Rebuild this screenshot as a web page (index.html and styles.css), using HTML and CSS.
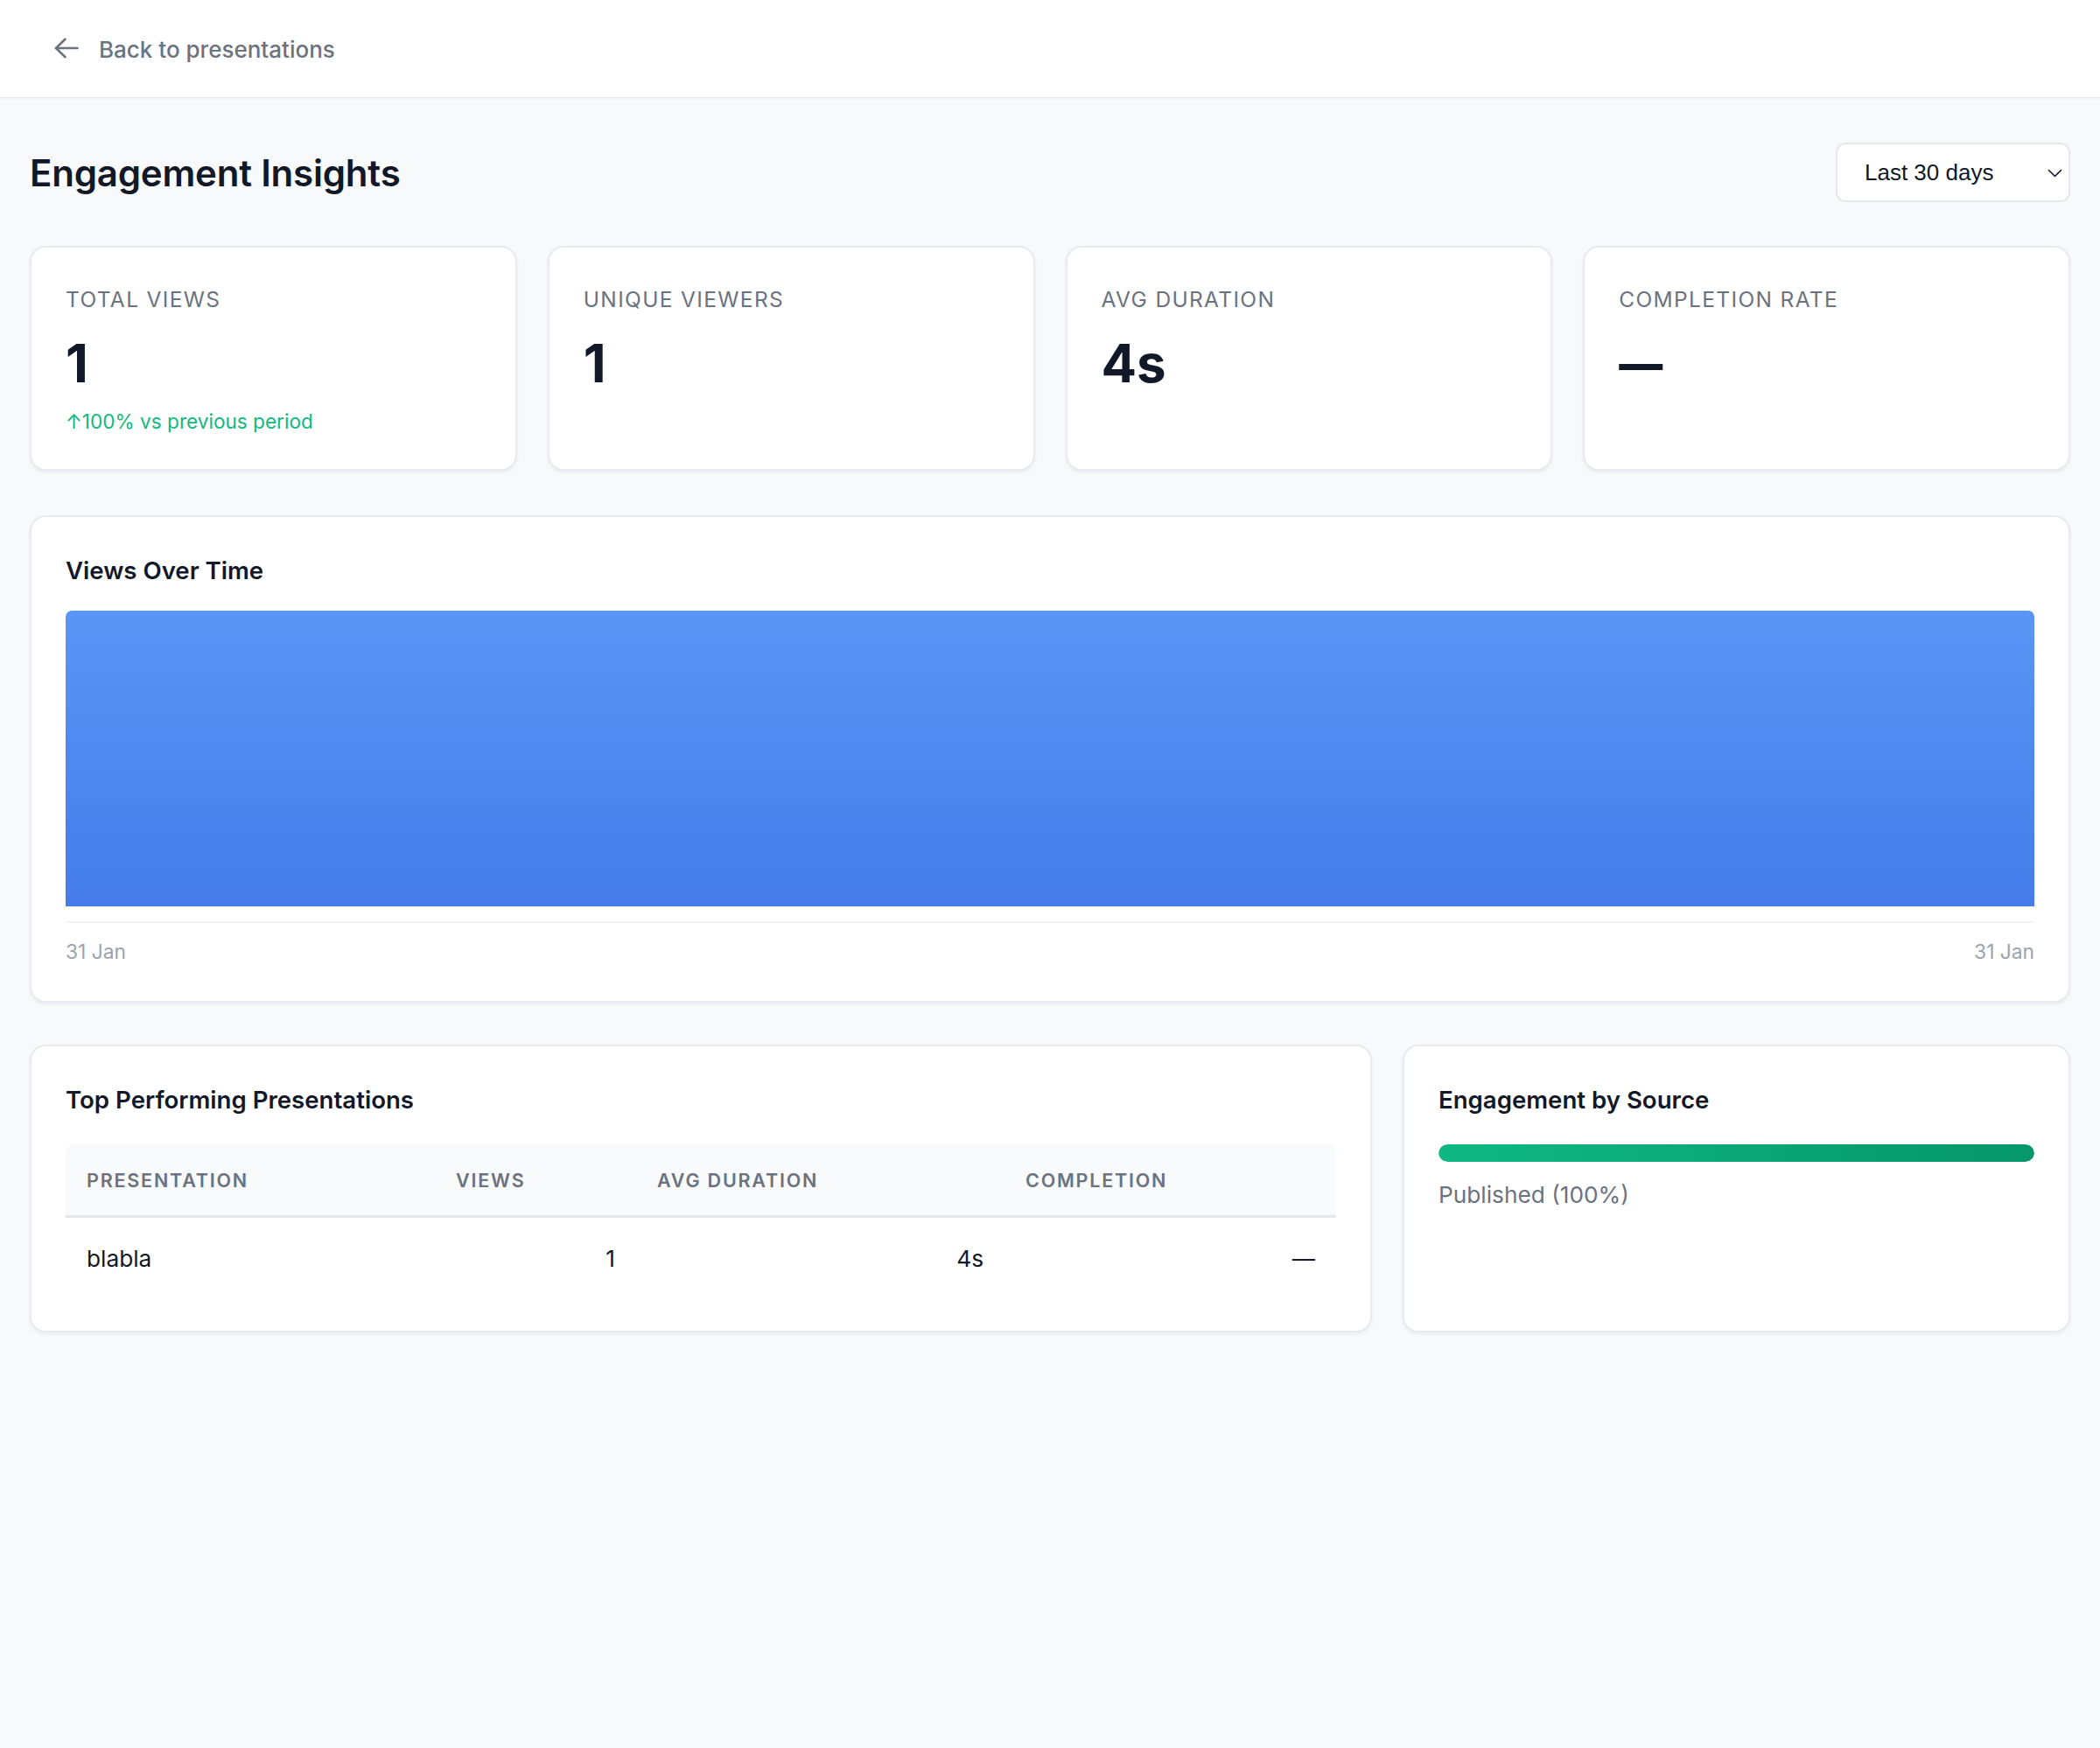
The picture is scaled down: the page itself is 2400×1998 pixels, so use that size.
FILE: index.html
```html
<!DOCTYPE html>
<html lang="en">
<head>
<meta charset="utf-8">
<title>Engagement Insights</title>
<link rel="stylesheet" href="styles.css">
</head>
<body>
<header class="topbar">
  <a class="back-link" href="#">
    <svg class="back-icon" width="28" height="24" viewBox="0 0 28 24" fill="none" stroke="currentColor" stroke-width="2.6" stroke-linecap="round" stroke-linejoin="round">
      <path d="M26.5 12H2"/>
      <path d="M12.5 1.8 2 12l10.5 10.2"/>
    </svg>
    <span>Back to presentations</span>
  </a>
</header>

<main class="page">
  <div class="title-row">
    <h1 class="page-title">Engagement Insights</h1>
    <div class="range-select" role="combobox" aria-expanded="false">
      <span>Last 30 days</span>
      <svg class="chevron" width="17" height="10" viewBox="0 0 17 10" fill="none" stroke="#111827" stroke-width="1.6" stroke-linecap="round" stroke-linejoin="round">
        <path d="M1.5 1.5 8.5 8.5 15.5 1.5"/>
      </svg>
    </div>
  </div>

  <section class="stats">
    <div class="card stat">
      <div class="stat-label">Total Views</div>
      <div class="stat-value">1</div>
      <div class="stat-change">↑100% vs previous period</div>
    </div>
    <div class="card stat">
      <div class="stat-label">Unique Viewers</div>
      <div class="stat-value">1</div>
    </div>
    <div class="card stat">
      <div class="stat-label">Avg Duration</div>
      <div class="stat-value">4s</div>
    </div>
    <div class="card stat">
      <div class="stat-label">Completion Rate</div>
      <div class="stat-value"><span class="dash">—</span></div>
    </div>
  </section>

  <section class="card chart-card">
    <h2 class="card-title chart-title">Views Over Time</h2>
    <div class="chart-area">
      <div class="chart-bar" style="height: 338px"></div>
    </div>
    <div class="chart-axis">
      <span>31 Jan</span>
      <span>31 Jan</span>
    </div>
  </section>

  <section class="bottom-row">
    <div class="card table-card">
      <h2 class="card-title">Top Performing Presentations</h2>
      <table class="top-table">
        <colgroup>
          <col class="c-name">
          <col class="c-views">
          <col class="c-dur">
          <col class="c-comp">
        </colgroup>
        <thead>
          <tr>
            <th>Presentation</th>
            <th>Views</th>
            <th>Avg Duration</th>
            <th>Completion</th>
          </tr>
        </thead>
        <tbody>
          <tr>
            <td>blabla</td>
            <td class="num">1</td>
            <td class="num">4s</td>
            <td class="num">—</td>
          </tr>
        </tbody>
      </table>
    </div>

    <div class="card source-card">
      <h2 class="card-title">Engagement by Source</h2>
      <div class="source-bar"><div class="source-fill" style="width: 100%"></div></div>
      <div class="source-label">Published (100%)</div>
    </div>
  </section>
</main>
</body>
</html>
```

FILE: styles.css
```css
* {
  box-sizing: border-box;
}

html, body {
  margin: 0;
  padding: 0;
}

body {
  background: #f8f9fb;
  font-family: Inter, "Noto Sans", "Liberation Sans", sans-serif;
  color: #111827;
  min-height: 1998px;
}

/* top navigation bar */
.topbar {
  height: 112px;
  background: #ffffff;
  border-bottom: 1px solid #e5e7eb;
  box-shadow: 0 1px 3px rgba(17, 24, 39, 0.05);
  display: flex;
  align-items: center;
  padding-left: 62px;
}

.back-link {
  display: flex;
  align-items: center;
  gap: 23px;
  color: #6b7280;
  text-decoration: none;
  font-size: 26px;
  font-weight: 500;
  line-height: 36px;
  padding-top: 2px;
}

.back-icon {
  display: block;
  margin-top: -3px;
}

/* page body */
.page {
  padding: 51px 34px 0;
}

.title-row {
  display: flex;
  align-items: center;
  justify-content: space-between;
  height: 68px;
}

.page-title {
  margin: 0;
  font-size: 42px;
  font-weight: 600;
  line-height: 52px;
  letter-spacing: -0.2px;
  color: #111827;
  padding-top: 2px;
}

.range-select {
  width: 268px;
  height: 68px;
  background: #ffffff;
  border: 2px solid #e5e7eb;
  border-radius: 11px;
  display: flex;
  align-items: center;
  justify-content: space-between;
  padding: 0 7px 0 31px;
  font-family: "Liberation Sans", Arial, sans-serif;
  font-size: 26px;
  color: #111827;
}

.chevron {
  display: block;
  margin-top: 1px;
}

/* cards */
.card {
  background: #ffffff;
  border: 2px solid #e8eaee;
  border-radius: 18px;
  box-shadow: 0 2px 4px rgba(17, 24, 39, 0.06);
}

.stats {
  margin-top: 50px;
  display: grid;
  grid-template-columns: repeat(4, 1fr);
  gap: 35px;
}

.stat {
  height: 257px;
  padding: 42px 39px 36px;
}

.stat-label {
  font-size: 24.5px;
  line-height: 35px;
  font-weight: 400;
  letter-spacing: 1.35px;
  text-transform: uppercase;
  color: #6b7280;
}

.stat-value {
  margin-top: 20px;
  font-size: 60px;
  line-height: 70px;
  font-weight: 700;
  color: #111827;
}

.stat-value .dash {
  display: inline-block;
  font-size: 50px;
  transform: translateY(-4px) scaleY(1.2);
}

.stat-change {
  margin-top: 16px;
  font-size: 22.6px;
  line-height: 32px;
  color: #10b981;
}

.card-title {
  margin: 0;
  font-size: 27.6px;
  line-height: 38px;
  font-weight: 600;
  color: #111827;
}

/* views over time */
.chart-card {
  margin-top: 51px;
  padding: 42px 39px 40px;
}

.chart-title {
  margin-bottom: 27px;
}

.chart-area {
  border-bottom: 2px solid #f1f2f4;
  padding-bottom: 17px;
  display: flex;
  align-items: flex-end;
}

.chart-bar {
  flex: 1;
  border-radius: 7px 7px 0 0;
  background: linear-gradient(180deg, #5b95f5 0%, #4f89f0 50%, #457cea 100%);
}

.chart-axis {
  margin-top: 17px;
  display: flex;
  justify-content: space-between;
  font-size: 22.75px;
  line-height: 32px;
  color: #9ca3af;
}

/* bottom row */
.bottom-row {
  margin-top: 48px;
  display: grid;
  grid-template-columns: 2fr 1fr;
  gap: 35px;
}

.table-card,
.source-card {
  height: 329px;
  padding: 42px 39px 0;
}

.top-table {
  margin-top: 32px;
  width: 100%;
  table-layout: fixed;
  border-collapse: separate;
  border-spacing: 0;
}

.c-name { width: 422px; }
.c-views { width: 230px; }
.c-dur { width: 421px; }
.c-comp { width: 379px; }

.top-table th {
  background: #f9fafb;
  text-align: left;
  font-size: 21.5px;
  line-height: 28px;
  font-weight: 600;
  letter-spacing: 1.8px;
  text-transform: uppercase;
  color: #6b7280;
  padding: 27px 24px 26px;
  border-bottom: 3px solid #e5e7eb;
}

.top-table th:first-child {
  border-top-left-radius: 10px;
}

.top-table th:last-child {
  border-top-right-radius: 10px;
}

.top-table td {
  font-size: 26.25px;
  line-height: 35px;
  color: #111827;
  padding: 29px 24px 20px;
}

.top-table td.num {
  text-align: right;
}

/* engagement by source */
.source-bar {
  margin-top: 32px;
  height: 20px;
  border-radius: 10px;
  background: #f3f4f6;
  overflow: hidden;
}

.source-fill {
  height: 100%;
  border-radius: 10px;
  background: linear-gradient(90deg, #10b981 0%, #059669 100%);
}

.source-label {
  margin-top: 20px;
  font-size: 26.25px;
  line-height: 35px;
  color: #6b7280;
}
```
